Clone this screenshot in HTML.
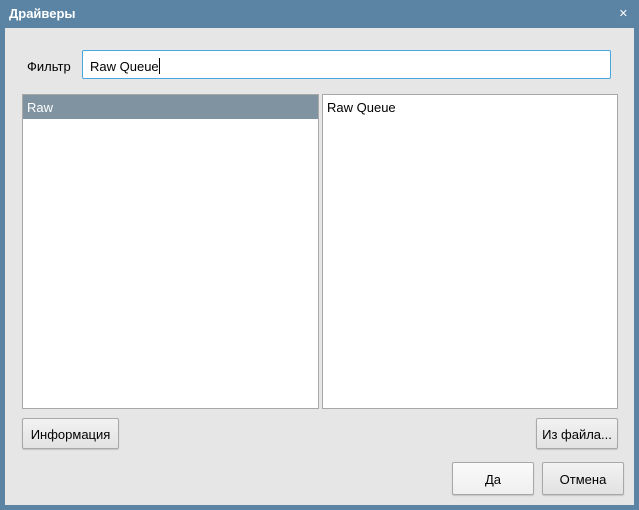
<!DOCTYPE html><html><head><style>
body{margin:0;width:639px;height:510px;background:#5a83a4;font-family:"Liberation Sans","DejaVu Sans",sans-serif;font-size:13px;position:relative;overflow:hidden}
.t{position:absolute;left:9px;top:6px;color:#fff;font-weight:bold;font-size:13px}
.x{position:absolute;right:11px;top:7px;color:#fff;font-size:11px}
.c{position:absolute;left:5px;top:28px;width:629px;height:477px;background:#e6e6e6}
.a{position:absolute}
.btn{position:absolute;border:1px solid #a8a8a8;border-radius:2px;background:linear-gradient(#f2f2f2,#e2e2e2);text-align:center;color:#000;box-sizing:border-box;box-shadow:0 1px 1px rgba(0,0,0,.15)}
</style></head><body>
<div class="t">Драйверы</div><div class="x">✕</div>
<div class="c"></div>
<div class="a" style="left:27px;top:59px">Фильтр</div>
<div class="a" style="left:82px;top:50px;width:529px;height:29px;box-sizing:border-box;border:1px solid #4aa6e0;border-radius:2px;background:#fff;padding:7px 0 0 7px">Raw Queue<span style="display:inline-block;width:1px;height:16px;background:#000;vertical-align:-3px"></span></div>
<div class="a" style="left:22px;top:94px;width:297px;height:315px;box-sizing:border-box;border:1px solid #a8a8a8;background:#fff">
<div style="height:24px;background:#7f93a1;color:#fff;padding:5px 0 0 4px;box-sizing:border-box">Raw</div></div>
<div class="a" style="left:322px;top:94px;width:296px;height:315px;box-sizing:border-box;border:1px solid #a8a8a8;background:#fff;padding:5px 0 0 4px">Raw Queue</div>
<div class="btn" style="left:22px;top:418px;width:97px;height:31px;padding-top:8px">Информация</div>
<div class="btn" style="left:536px;top:418px;width:82px;height:31px;padding-top:8px">Из файла...</div>
<div class="btn" style="left:452px;top:462px;width:82px;height:33px;padding-top:9px;background:linear-gradient(#fafafa,#efefef)">Да</div>
<div class="btn" style="left:542px;top:462px;width:82px;height:33px;padding-top:9px">Отмена</div>
</body></html>
